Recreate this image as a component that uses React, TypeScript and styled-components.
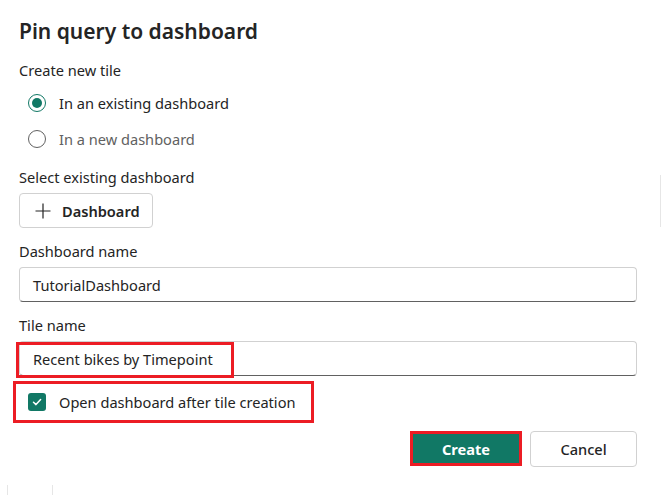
import React from "react";
import styled, { createGlobalStyle } from "styled-components";

const Global = createGlobalStyle`
  html, body { margin: 0; padding: 0; background: #ffffff; }
  body { font-family: "Noto Sans", "Open Sans", sans-serif; color: #242424; }
  * { box-sizing: border-box; }
`;

const Page = styled.div`
  width: 661px;
  height: 495px;
  display: flex;
  overflow: hidden;
  background: #fff;
`;

const Main = styled.div`
  flex: 1;
  display: flex;
  flex-direction: column;
`;

const Dialog = styled.div`
  display: flex;
  flex-direction: column;
  padding: 17px 23px 0 19px;
`;

const Rail = styled.div`
  width: 1px;
  height: 52px;
  margin-top: 175px;
  background: #e6e6e6;
`;

const Title = styled.h1`
  margin: 0;
  font-size: 21px;
  line-height: 28px;
  font-weight: 600;
  color: #242424;
`;

const Label = styled.div<{ $top: number }>`
  margin-top: ${(p) => p.$top}px;
  font-size: 14.6px;
  line-height: 20px;
  color: #242424;
`;

const RadioGroup = styled.div`
  display: flex;
  flex-direction: column;
  margin-top: 5px;
  padding-left: 9px;
`;

const RadioRow = styled.label<{ $muted?: boolean }>`
  display: flex;
  align-items: center;
  height: 36px;
  gap: 13px;
  font-size: 14.6px;
  color: ${(p) => (p.$muted ? "#616161" : "#242424")};
`;

const RadioCircle = styled.span<{ $checked?: boolean }>`
  width: 18px;
  height: 18px;
  border-radius: 50%;
  border: 1px solid ${(p) => (p.$checked ? "#117865" : "#616161")};
  display: flex;
  align-items: center;
  justify-content: center;
  &::after {
    content: "";
    width: 10px;
    height: 10px;
    border-radius: 50%;
    background: ${(p) => (p.$checked ? "#117865" : "transparent")};
  }
`;

const AddButton = styled.button`
  margin-top: 6px;
  align-self: flex-start;
  height: 35px;
  width: 134px;
  display: flex;
  align-items: center;
  gap: 11px;
  padding: 0 0 0 15px;
  background: #fff;
  border: 1px solid #d1d1d1;
  border-radius: 4px;
  font-family: inherit;
  font-size: 14.6px;
  font-weight: 600;
  color: #242424;
`;

const Input = styled.div`
  margin-top: 6px;
  height: 35px;
  width: 618px;
  display: flex;
  align-items: center;
  padding-left: 13px;
  border: 1px solid #d1d1d1;
  border-bottom-color: #616161;
  border-radius: 4px;
  font-size: 14.6px;
  color: #242424;
  position: relative;
`;

const Highlight = styled.span`
  position: absolute;
  left: -4px;
  top: 0px;
  width: 218px;
  height: 36px;
  border: 3px solid #ec1c24;
`;

const CheckRow = styled.div`
  margin-top: 5px;
  margin-left: -6px;
  width: 301px;
  height: 42px;
  display: flex;
  align-items: center;
  gap: 13px;
  padding-left: 12px;
  border: 3px solid #ec1c24;
  font-size: 14.6px;
  color: #242424;
`;

const CheckBox = styled.span`
  width: 18px;
  height: 18px;
  border-radius: 3px;
  background: #117865;
  display: flex;
  align-items: center;
  justify-content: center;
`;

const Footer = styled.div`
  margin-top: 8px;
  display: flex;
  justify-content: flex-end;
  gap: 8px;
  width: 618px;
`;

const PrimaryButton = styled.button`
  width: 112px;
  height: 35px;
  background: #117865;
  border: 3px solid #ec1c24;
  border-radius: 0;
  color: #fff;
  font-family: inherit;
  font-size: 14.6px;
  font-weight: 700;
`;

const SecondaryButton = styled.button`
  width: 107px;
  height: 36px;
  background: #fff;
  border: 1px solid #d1d1d1;
  border-radius: 4px;
  color: #242424;
  font-family: inherit;
  font-size: 14.6px;
  font-weight: 500;
`;

const Stub = styled.div`
  margin-top: auto;
  margin-left: 7px;
  width: 46px;
  height: 10px;
  border-left: 1px solid #e6e6e6;
  border-right: 1px solid #e6e6e6;
`;

export default function App() {
  return (
    <Page>
      <Global />
      <Main>
        <Dialog>
          <Title>Pin query to dashboard</Title>
          <Label $top={15}>Create new tile</Label>
          <RadioGroup>
            <RadioRow>
              <RadioCircle $checked />
              In an existing dashboard
            </RadioRow>
            <RadioRow $muted>
              <RadioCircle />
              In a new dashboard
            </RadioRow>
          </RadioGroup>
          <Label $top={10}>Select existing dashboard</Label>
          <AddButton>
            <svg width="16" height="16" viewBox="0 0 16 16">
              <path d="M8 0.5V15.5M0.5 8H15.5" stroke="#242424" strokeWidth="1.2" fill="none" />
            </svg>
            Dashboard
          </AddButton>
          <Label $top={13}>Dashboard name</Label>
          <Input>TutorialDashboard</Input>
          <Label $top={13}>Tile name</Label>
          <Input>
            <Highlight />
            Recent bikes by Timepoint
          </Input>
          <CheckRow>
            <CheckBox>
              <svg width="12" height="12" viewBox="0 0 12 12">
                <path d="M2.5 6.2L5 8.6L9.6 3.6" stroke="#fff" strokeWidth="1.5" fill="none" strokeLinecap="round" strokeLinejoin="round" />
              </svg>
            </CheckBox>
            Open dashboard after tile creation
          </CheckRow>
          <Footer>
            <PrimaryButton>Create</PrimaryButton>
            <SecondaryButton>Cancel</SecondaryButton>
          </Footer>
        </Dialog>
        <Stub />
      </Main>
      <Rail />
    </Page>
  );
}
